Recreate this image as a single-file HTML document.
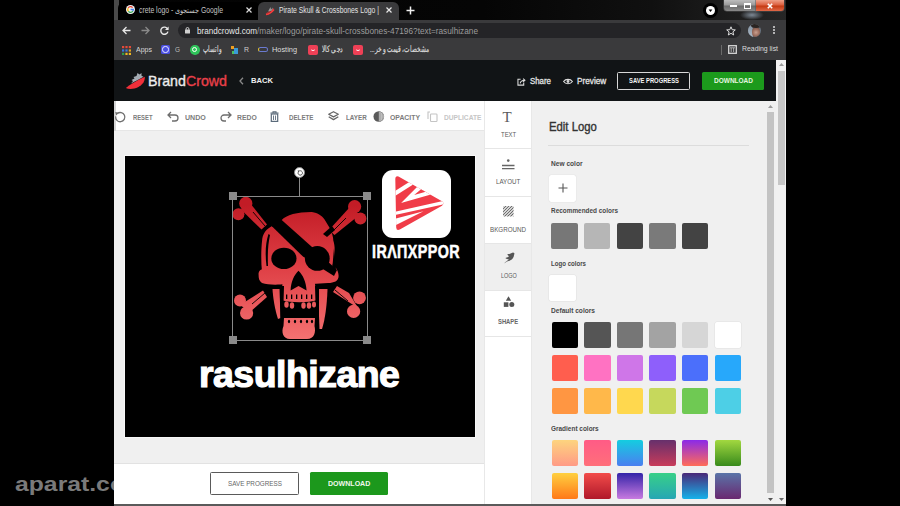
<!DOCTYPE html>
<html><head><meta charset="utf-8">
<style>
*{margin:0;padding:0;box-sizing:border-box}
html,body{width:900px;height:506px;overflow:hidden;background:#000;font-family:"Liberation Sans",sans-serif;position:relative}
.a{position:absolute}
.t{position:absolute;white-space:nowrap;line-height:1}
svg{position:absolute;overflow:visible}
#tabstrip{left:114px;top:0;width:672px;height:20px;background:linear-gradient(90deg,#030303 0%,#050505 55%,#101010 80%,#262626 100%)}
#toolbar{left:114px;top:20px;width:672px;height:40px;background:#3a3a3c}
#omni{left:178px;top:23px;width:563px;height:15px;border-radius:7.5px;background:#242427}
#hdr{left:114px;top:60px;width:662px;height:41px;background:#111416}
#tools{left:114px;top:101px;width:370px;height:30px;background:#fff;border-bottom:1px solid #e6e6e6}
#work{left:114px;top:131px;width:370px;height:332px;background:#f0f0f0}
#bottom{left:114px;top:463px;width:370px;height:41px;background:#fff;border-top:1px solid #e2e2e2}
#tabs{left:484px;top:101px;width:48px;height:403px;background:#fff;border-left:1px solid #e8e8e8;border-right:1px solid #e8e8e8}
#panel{left:532px;top:101px;width:244px;height:403px;background:#f0f0f0}
#oscroll{left:776px;top:60px;width:10px;height:444px;background:#f1f1f1}
#taskbar{left:114px;top:504px;width:672px;height:2px;background:#5a5a5a}
.tl{font-size:7px;font-weight:bold;color:#7c7c7c}
.sw{position:absolute;width:26.6px;height:26.8px;border-radius:2px}
.pt{font-size:7.5px;font-weight:bold;color:#484848}
.tabl{position:absolute;font-size:6.5px;color:#5a5a5a;line-height:1;white-space:nowrap}
.div{position:absolute;left:485px;width:46px;height:1px;background:#e6e6e6}
</style></head><body>
<!-- ===== CHROME TAB STRIP ===== -->
<div class="a" id="tabstrip"></div>
<div class="a" style="left:114px;top:0;width:5px;height:20px;background:#4a4a4a"></div>
<div class="a" style="left:118px;top:1.5px;width:142px;height:18.5px;background:#000;border-radius:6px 6px 0 0"></div>
<div class="a" style="left:258px;top:2px;width:141px;height:19px;background:#3a3a3c;border-radius:6px 6px 0 0"></div>
<!-- favicon G -->
<svg style="left:125.5px;top:5px" width="9" height="9" viewBox="0 0 9 9"><circle cx="4.5" cy="4.5" r="4.5" fill="#f2f2f2"></circle>
<path d="M6.6 2.6 A2.8 2.8 0 0 0 2.2 3.0" stroke="#ea4335" stroke-width="1.3" fill="none"></path>
<path d="M2.2 3.0 A2.8 2.8 0 0 0 2.4 6.3" stroke="#fbbc05" stroke-width="1.3" fill="none"></path>
<path d="M2.4 6.3 A2.8 2.8 0 0 0 6.9 6.0" stroke="#34a853" stroke-width="1.3" fill="none"></path>
<path d="M6.9 6.0 A2.8 2.8 0 0 0 7.3 4.5 H4.6" stroke="#4285f4" stroke-width="1.3" fill="none"></path>
</svg>
<div class="t" style="left: 139px; top: 6px; font-size: 8.3px; color: rgb(196, 196, 196); transform: scaleX(0.8245); transform-origin: 0px 50%;">crete logo - جستجوی Google</div>
<svg style="left:246px;top:7px" width="6" height="6" viewBox="0 0 6 6"><path d="M0.5 0.5 L5.5 5.5 M5.5 0.5 L0.5 5.5" stroke="#ddd" stroke-width="1.2"></path></svg>
<svg style="left:265px;top:6px" width="10" height="9" viewBox="0 0 10 9"><path d="M0.5 8 C3 7 7 5 9.5 2 L7.5 3 C5 5 2 6.5 0.5 8 Z" fill="#e02e2e"></path><path d="M3 5.5 L5.5 1 L6 3.5 L8 1.5 L7 4.5 Z" fill="#9a9a9a"></path><path d="M1 8.5 C4 8 7 6 9 3.5" stroke="#ff3a3a" stroke-width="1.5" fill="none"></path></svg>
<div class="t" style="left: 279px; top: 5.8px; font-size: 8.3px; color: rgb(228, 228, 228); transform: scaleX(0.8223); transform-origin: 0px 50%;">Pirate Skull &amp; Crossbones Logo |</div>
<svg style="left:386px;top:7px" width="6" height="6" viewBox="0 0 6 6"><path d="M0.5 0.5 L5.5 5.5 M5.5 0.5 L0.5 5.5" stroke="#e8e8e8" stroke-width="1.2"></path></svg>
<svg style="left:406px;top:6px" width="9" height="9" viewBox="0 0 9 9"><path d="M4.5 0.5 V8.5 M0.5 4.5 H8.5" stroke="#f0f0f0" stroke-width="1.5"></path></svg>
<!-- caption buttons -->
<div class="a" style="left:703px;top:2.5px;width:15px;height:15px;border-radius:50%;background:#000"></div>
<div class="a" style="left:706px;top:5.5px;width:9px;height:9px;border-radius:50%;background:#fff"></div>
<svg style="left:706px;top:5.5px" width="9" height="9" viewBox="0 0 9 9"><path d="M2.6 3.6 L6.4 3.6 L4.5 6 Z" fill="#000"></path></svg>
<div class="a" style="left:724px;top:0;width:32px;height:11px;border-radius:0 0 0 3px;background:linear-gradient(#bdbdbd,#9a9a9a 45%,#6a6a6a 55%,#8a8a8a);box-shadow:0 0 0 0.5px #555"></div>
<div class="a" style="left:730px;top:5px;width:7px;height:2px;background:#fff"></div>
<div class="a" style="left:744px;top:2.5px;width:7px;height:6px;border:1.4px solid #fff;border-top-width:2px"></div>
<div class="a" style="left:756px;top:0;width:28px;height:11px;border-radius:0 0 3px 0;background:linear-gradient(#eea088,#dc6040 45%,#c43a12 55%,#e06848);box-shadow:0 0 0 0.5px #555"></div>
<svg style="left:767px;top:2.5px" width="6" height="6" viewBox="0 0 6 6"><path d="M0.8 0.8 L5.2 5.2 M5.2 0.8 L0.8 5.2" stroke="#fff" stroke-width="1.6"></path></svg>
<div class="a" style="left:740px;top:10px;width:24px;height:10px;background:radial-gradient(ellipse at center,#7d8894 0%,rgba(50,50,50,0) 70%)"></div>
<!-- ===== TOOLBAR ===== -->
<div class="a" id="toolbar"></div>
<svg style="left:122px;top:25.5px" width="9" height="9" viewBox="0 0 9 9"><path d="M8.5 4.5 H1 M4.5 1 L1 4.5 L4.5 8" stroke="#e8e8e8" stroke-width="1.3" fill="none"></path></svg>
<svg style="left:141px;top:25.5px" width="9" height="9" viewBox="0 0 9 9"><path d="M0.5 4.5 H8 M4.5 1 L8 4.5 L4.5 8" stroke="#8a8a8a" stroke-width="1.3" fill="none"></path></svg>
<svg style="left:159.5px;top:25.5px" width="9" height="9" viewBox="0 0 9 9"><path d="M7.6 3 A3.6 3.6 0 1 0 7.9 5.6" stroke="#e8e8e8" stroke-width="1.4" fill="none"></path><path d="M8.6 0.4 V4 H5 Z" fill="#e8e8e8"></path></svg>
<div class="a" id="omni"></div>
<svg style="left:185px;top:27px" width="5" height="6.5" viewBox="0 0 5 6.5"><rect x="0" y="2.5" width="5" height="4" rx="0.5" fill="#cfcfcf"></rect><path d="M1.1 2.8 V1.9 A1.4 1.4 0 0 1 3.9 1.9 V2.8" stroke="#cfcfcf" stroke-width="1" fill="none"></path></svg>
<div class="t" style="left:197px;top:26.5px;font-size:8.6px;color:#e8e8e8"><span style="display: inline-block; transform: scaleX(0.9444); transform-origin: 0px 50%;">brandcrowd.com</span></div>
<div class="t" style="left: 257px; top: 26.5px; font-size: 8.6px; color: rgb(156, 156, 156); transform: scaleX(0.9608); transform-origin: 0px 50%;">/maker/logo/pirate-skull-crossbones-47196?text=rasulhizane</div>
<svg style="left:726px;top:25.5px" width="10" height="10" viewBox="0 0 10 10"><path d="M5 0.8 L6.2 3.7 L9.3 3.9 L6.9 5.9 L7.7 9 L5 7.3 L2.3 9 L3.1 5.9 L0.7 3.9 L3.8 3.7 Z" stroke="#ddd" stroke-width="1" fill="none" stroke-linejoin="round"></path></svg>
<div class="a" style="left:748px;top:24px;width:13px;height:13px;border-radius:50%;overflow:hidden;background:#6a7480">
<div class="a" style="left:0;top:0;width:5px;height:13px;background:linear-gradient(#8090a0,#b0bcc8)"></div>
<div class="a" style="left:4px;top:3px;width:8px;height:10px;border-radius:45%;background:radial-gradient(circle at 50% 55%,#c8a090 0%,#a07060 45%,#5a4038 100%)"></div>
<div class="a" style="left:3px;top:-1px;width:10px;height:5px;border-radius:50%;background:#2a2422"></div>
</div>
<div class="a" style="left:772.5px;top:26px;width:2px;height:2px;border-radius:1px;background:#ddd;box-shadow:0 3px 0 #ddd,0 6px 0 #ddd"></div>
<!-- bookmarks -->
<svg style="left:122px;top:45.6px" width="9" height="9" viewBox="0 0 9 9">
<rect x="0" y="0" width="2.2" height="2.2" fill="#e64a3a"></rect><rect x="3.4" y="0" width="2.2" height="2.2" fill="#e64a3a"></rect><rect x="6.8" y="0" width="2.2" height="2.2" fill="#e64a3a"></rect>
<rect x="0" y="3.4" width="2.2" height="2.2" fill="#3a78e0"></rect><rect x="3.4" y="3.4" width="2.2" height="2.2" fill="#3a78e0"></rect><rect x="6.8" y="3.4" width="2.2" height="2.2" fill="#e0a020"></rect>
<rect x="0" y="6.8" width="2.2" height="2.2" fill="#2fa04a"></rect><rect x="3.4" y="6.8" width="2.2" height="2.2" fill="#f0b820"></rect><rect x="6.8" y="6.8" width="2.2" height="2.2" fill="#f0b820"></rect></svg>
<div class="t" style="left: 135.8px; top: 45.5px; font-size: 8px; color: rgb(216, 216, 216); transform: scaleX(0.8775); transform-origin: 0px 50%;">Apps</div>
<div class="a" style="left:161px;top:45.1px;width:9px;height:9px;border-radius:1.5px;background:#4a4ee0"></div>
<div class="a" style="left:162.3px;top:46.4px;width:6.4px;height:6.4px;border-radius:50%;border:1px solid #e6e8ff"></div>
<div class="t" style="left: 175px; top: 45.5px; font-size: 8px; color: rgb(188, 188, 188); transform: scaleX(0.802); transform-origin: 0px 50%;">G</div>
<div class="a" style="left:190px;top:45.1px;width:9.5px;height:9.5px;border-radius:50%;background:#2fc45a"></div>
<div class="a" style="left:192.2px;top:47.3px;width:5px;height:5px;border-radius:50%;border:1px solid #fff"></div>
<div class="t" style="left: 203px; top: 44.6px; font-size: 8.5px; color: rgb(221, 221, 221); -webkit-text-stroke: 0.2px rgb(221, 221, 221); transform: scaleX(0.6207); transform-origin: 0px 50%;">واتساپ</div>
<div class="a" style="left:231px;top:46.1px;width:3px;height:3px;background:#f0a020"></div>
<div class="a" style="left:234px;top:47.6px;width:4px;height:6px;background:#3a9ad8"></div>
<div class="a" style="left:232px;top:50.6px;width:2px;height:3px;background:#4cc060"></div>
<div class="t" style="left: 244px; top: 45.5px; font-size: 8px; color: rgb(204, 204, 204); transform: scaleX(0.8649); transform-origin: 0px 50%;">R</div>
<div class="a" style="left:258px;top:47.1px;width:10px;height:5px;border-radius:3px;border:1.5px solid #6a7ad0;border-left-color:#e0c030"></div>
<div class="t" style="left: 272px; top: 45.5px; font-size: 8px; color: rgb(221, 221, 221); transform: scaleX(0.9217); transform-origin: 0px 50%;">Hosting</div>
<div class="a" style="left:308px;top:45.1px;width:10px;height:9.5px;border-radius:2px;background:#ef4056"></div>
<div class="a" style="left:311px;top:48.6px;width:4px;height:2px;border-bottom:1px solid #fff;border-radius:0 0 3px 3px"></div>
<div class="t" style="left: 322px; top: 44.6px; font-size: 8.5px; color: rgb(221, 221, 221); -webkit-text-stroke: 0.2px rgb(221, 221, 221); transform: scaleX(0.6486); transform-origin: 0px 50%;">دجی کالا</div>
<div class="a" style="left:353px;top:45.1px;width:10px;height:9.5px;border-radius:2px;background:#ef4056"></div>
<div class="a" style="left:356px;top:48.6px;width:4px;height:2px;border-bottom:1px solid #fff;border-radius:0 0 3px 3px"></div>
<div class="t" style="left: 370px; top: 44.6px; font-size: 8.5px; color: rgb(221, 221, 221); direction: rtl; unicode-bidi: isolate; -webkit-text-stroke: 0.2px rgb(221, 221, 221); transform: scaleX(0.6471); transform-origin: 0px 50%;">مشخصات، قیمت و خر...</div>
<div class="a" style="left:721px;top:45px;width:1px;height:10px;background:#6a6a6a"></div>
<svg style="left:727.8px;top:44.8px" width="9" height="9" viewBox="0 0 9 9"><rect x="0.7" y="0.7" width="7.6" height="7.6" stroke="#d8d8d8" stroke-width="1.3" fill="none"></rect><path d="M2 2.8 H7 M3.2 3 V7 M5.6 3 V7" stroke="#c8c8c8" stroke-width="0.8"></path></svg>
<div class="t" style="left: 741.5px; top: 44.9px; font-size: 8px; color: rgb(221, 221, 221); transform: scaleX(0.861); transform-origin: 0px 50%;">Reading list</div>
<!-- ===== BRANDCROWD HEADER ===== -->
<div class="a" id="hdr"></div>
<svg style="left:125px;top:72px" width="21" height="18" viewBox="0 0 21 18">
<path d="M6 11.5 L8 9 L6.5 8 L9.5 6.5 L8.5 5 L11.5 4 L12.5 1 L14.5 2.5 L16.5 1 L16.5 3.8 L18.5 4.8 C14.5 7 10 9.5 6 11.5 Z" fill="#a4acb4"></path>
<path d="M0.8 16 C5 12.5 12 8.5 19.8 4.8 C20.2 10 16.5 14.5 9.5 16.6 C6 17.4 3 17.2 0.8 16 Z" fill="#f0303a"></path>
</svg>
<div class="t" style="left: 147.6px; top: 73.6px; font-size: 14.5px; color: rgb(236, 236, 236); -webkit-text-stroke: 0.35px; transform: scaleX(0.98); transform-origin: 0px 50%;">Brand<span style="color:#e9404a">Crowd</span></div>
<svg style="left:238.5px;top:77px" width="5" height="8" viewBox="0 0 5 8"><path d="M4 0.8 L1 4 L4 7.2" stroke="#8a8a8a" stroke-width="1.3" fill="none"></path></svg>
<div class="t" style="left: 251px; top: 77px; font-size: 8px; font-weight: bold; color: rgb(240, 240, 240); transform: scaleX(0.952); transform-origin: 0px 50%;">BACK</div>
<svg style="left:516.8px;top:77.5px" width="9" height="8" viewBox="0 0 10 9"><path d="M4 1.5 H1 V8 H7.5 V5" stroke="#dcdcdc" stroke-width="1.2" fill="none"></path><path d="M3.5 6 C4 3.5 6 2.5 8.5 2.5 M6.8 0.8 L8.8 2.5 L6.8 4.2" stroke="#dcdcdc" stroke-width="1.2" fill="none"></path></svg>
<div class="t" style="left: 530.3px; top: 76.7px; font-size: 9px; color: rgb(228, 228, 228); -webkit-text-stroke: 0.3px; transform: scaleX(0.8739); transform-origin: 0px 50%;">Share</div>
<svg style="left:563px;top:78px" width="10" height="7" viewBox="0 0 10 7"><path d="M0.6 3.5 C2.5 0.6 7.5 0.6 9.4 3.5 C7.5 6.4 2.5 6.4 0.6 3.5 Z" stroke="#dcdcdc" stroke-width="1.1" fill="none"></path><circle cx="5" cy="3.5" r="1.4" fill="#dcdcdc"></circle></svg>
<div class="t" style="left: 577px; top: 76.7px; font-size: 9px; color: rgb(228, 228, 228); -webkit-text-stroke: 0.3px; transform: scaleX(0.9121); transform-origin: 0px 50%;">Preview</div>
<div class="a" style="left:617px;top:72px;width:73px;height:17.5px;border:1.6px solid #d8d8d8;border-radius:1.5px"></div>
<div class="t" style="left: 629px; top: 76.8px; font-size: 7px; font-weight: bold; color: rgb(244, 244, 244); transform: scaleX(0.831); transform-origin: 0px 50%;">SAVE PROGRESS</div>
<div class="a" style="left:702px;top:72px;width:62px;height:17.5px;background:#1c9a1c;border-radius:1.5px"></div>
<div class="t" style="left: 714px; top: 76.8px; font-size: 7px; font-weight: bold; color: rgb(230, 246, 224); transform: scaleX(0.9286); transform-origin: 0px 50%;">DOWNLOAD</div>
<!-- outer scrollbar -->
<div class="a" id="oscroll"></div>
<svg style="left:778.5px;top:63px" width="5" height="3" viewBox="0 0 5 3"><path d="M0 3 L2.5 0 L5 3 Z" fill="#9a9a9a"></path></svg>
<div class="a" style="left:777.5px;top:70.5px;width:7.5px;height:114.7px;background:#c6c6c6"></div>
<svg style="left:778.5px;top:498px" width="5" height="3" viewBox="0 0 5 3"><path d="M0 0 L2.5 3 L5 0 Z" fill="#6a6a6a"></path></svg>
<!-- ===== TOOLS ROW ===== -->
<div class="a" id="tools"></div>
<div class="a" style="left:114px;top:101px;width:1.5px;height:403px;background:#d4d4d4"></div>
<svg style="left:114px;top:110.5px" width="12" height="12" viewBox="0 0 12 12"><path d="M3.3 2.6 A4.6 4.6 0 1 1 1.7 5.4" stroke="#707070" stroke-width="1.3" fill="none"></path><path d="M1.2 1.0 L4.8 1.8 L2.2 4.6 Z" fill="#707070"></path></svg>
<div class="t tl" style="left: 132.5px; top: 113.8px; transform: scaleX(0.8353); transform-origin: 0px 50%;">RESET</div>
<svg style="left:167px;top:111px" width="12" height="11" viewBox="0 0 12 11"><path d="M4 1 L1 4 L4 7 M1 4 H8 A3 3 0 0 1 8 10 H5" stroke="#6e6e6e" stroke-width="1.3" fill="none"></path></svg>
<div class="t tl" style="left: 184.6px; top: 113.8px; transform: scaleX(1.0085); transform-origin: 0px 50%;">UNDO</div>
<svg style="left:219.5px;top:111px" width="12" height="11" viewBox="0 0 12 11"><path d="M8 1 L11 4 L8 7 M11 4 H4 A3 3 0 0 0 4 10 H6" stroke="#6e6e6e" stroke-width="1.3" fill="none"></path></svg>
<div class="t tl" style="left: 237px; top: 113.8px; transform: scaleX(0.9736); transform-origin: 0px 50%;">REDO</div>
<svg style="left:270px;top:110.5px" width="9" height="11" viewBox="0 0 9 11"><path d="M0.5 2 H8.5 M3 2 V0.8 H6 V2" stroke="#5a6a7a" stroke-width="1.1" fill="none"></path><rect x="1.3" y="3" width="6.4" height="7.4" stroke="#5a6a7a" stroke-width="1.2" fill="none"></rect><path d="M3.5 4.5 V9 M5.5 4.5 V9" stroke="#5a6a7a" stroke-width="0.9"></path></svg>
<div class="t tl" style="left: 288.5px; top: 113.8px; transform: scaleX(0.8869); transform-origin: 0px 50%;">DELETE</div>
<svg style="left:327.5px;top:110.5px" width="11" height="10.5" viewBox="0 0 11 10.5"><path d="M5.5 0.7 L10.3 3.3 L5.5 5.9 L0.7 3.3 Z" stroke="#666" stroke-width="1.2" fill="none" stroke-linejoin="round"></path><path d="M0.7 5.8 L5.5 8.6 L10.3 5.8" stroke="#666" stroke-width="1.3" fill="none" stroke-linejoin="round"></path></svg>
<div class="t tl" style="left: 345.6px; top: 113.8px; transform: scaleX(0.9007); transform-origin: 0px 50%;">LAYER</div>
<svg style="left:372.5px;top:110.5px" width="11.5" height="11" viewBox="0 0 11.5 11"><circle cx="5.75" cy="5.5" r="5.3" fill="#5a5a5a"></circle><path d="M5.75 0.2 A5.3 5.3 0 0 1 5.75 10.8 Z" fill="#9a9a9a"></path><path d="M7 1 V10 M8.6 2 V9 M10 3.5 V7.5" stroke="#ddd" stroke-width="0.6"></path></svg>
<div class="t tl" style="left: 390px; top: 113.8px; transform: scaleX(0.9801); transform-origin: 0px 50%;">OPACITY</div>
<svg style="left:426.5px;top:110.5px" width="11" height="11" viewBox="0 0 11 11"><path d="M3 1 H1 V8" stroke="#c4c4c4" stroke-width="1.1" fill="none"></path><rect x="3.5" y="3" width="6.5" height="7.5" rx="0.8" stroke="#c4c4c4" stroke-width="1.1" fill="none"></rect></svg>
<div class="t tl" style="left: 443.6px; top: 113.8px; color: rgb(198, 198, 198); transform: scaleX(0.9457); transform-origin: 0px 50%;">DUPLICATE</div>
<!-- ===== WORK AREA ===== -->
<div class="a" id="work"></div>
<div class="a" style="left:124.6px;top:155.5px;width:350.4px;height:281.5px;background:#000;box-shadow:0 0 0 1px #f8f8f8"></div>
<!-- skull -->
<svg style="left:228px;top:190px" width="144" height="155" viewBox="0 0 144 155">
<defs><linearGradient id="rg" gradientUnits="userSpaceOnUse" x1="0" y1="15" x2="0" y2="150"><stop offset="0" stop-color="#c21c26"></stop><stop offset="0.45" stop-color="#de3e44"></stop><stop offset="1" stop-color="#f47272"></stop></linearGradient></defs>
<g fill="url(#rg)">
<!-- bones TL -->
<circle cx="17.8" cy="13.4" r="6.6"></circle><circle cx="10.4" cy="24.3" r="6"></circle>
<path d="M12.5 19 L22 13 L39 34.5 L33.5 39.5 Z"></path>
<!-- TR -->
<circle cx="126.6" cy="16.6" r="6.6"></circle><circle cx="132.4" cy="28.6" r="6"></circle>
<path d="M121.5 17.5 L132 24.5 L106.5 45 L101 40 Z"></path>
<!-- BL -->
<circle cx="12" cy="110.5" r="6"></circle><circle cx="18.6" cy="123" r="6.6"></circle>
<path d="M12 115 L22 122 L39 107 L35 100.5 Z"></path>
<!-- BR -->
<circle cx="131.5" cy="107.8" r="6.4"></circle><circle cx="125.6" cy="121.4" r="6.6"></circle>
<path d="M121 103 L130 118 L105 102 L109 96 Z"></path>
<!-- cranium -->
<path d="M53.7 30.1 C58 25 70 22 83.9 22.1 C90 23 94 26 96.4 29.2 L101.7 38.1 C104 43 105.3 47 105.3 50.6 C107 56 107 61 106 68 L104 78 L86 90 L56 90 L34 82 C33 72 33 60 34.1 50.6 C34.5 45 37 40 42.1 37.2 Z"></path>
<!-- cheeks -->
<path d="M30.6 85 C30 80 34 78 40 78.5 L58 80 L57 94 C50 95 40 95 34 93 C31 91 30.6 88 30.6 85 Z"></path>
<path d="M84 80 L101 75.5 C107 75 110.6 80 110.6 86 C110.6 91 106 93 100 93 L84 94 Z"></path>
<!-- maxilla -->
<path d="M55 88 L86 88 L89.5 110 C80 113 63 113 53 110 Z"></path>
<!-- side jaws -->
<path d="M44.5 99 L51.5 99 L52.5 128 L50 129 C47 120 45 108 44.5 99 Z"></path>
<path d="M90 99 L99.5 99 C99 115 97 130 94 139 L91.5 139 Z"></path>
<!-- lower teeth + chin -->
<path d="M56 128 L87 128 L86.5 136 C88 142 86.5 149 79 149 L62 149 C55 149 53 142 55.5 136 Z"></path>
</g>
<g fill="#000">
<!-- band -->
<path d="M53.7 30.1 L85.7 58.6 L109 80 L106 86 L75 66.6 L43.9 36.3 L42 33 L48 27 Z"></path>
<!-- notch for TR bone -->
<path d="M95 44 L104 36 L107 40 L99 47 Z"></path>
<!-- eyes -->
<ellipse cx="55.9" cy="68.4" rx="12.6" ry="10.7"></ellipse>
<ellipse cx="89.3" cy="68.4" rx="12.4" ry="12.4"></ellipse>
<!-- bone splits -->
<path d="M25 22 L37 36" stroke="#000" stroke-width="0.9"></path>
<path d="M118 28 L104 42" stroke="#000" stroke-width="0.9"></path>
<path d="M24 114 L37 103" stroke="#000" stroke-width="0.9"></path>
<path d="M120 111 L107 100" stroke="#000" stroke-width="0.9"></path>
<!-- creases -->
<path d="M40.5 44 C37.5 53 37 64 38.5 76 L40 76 C39.5 64 40 54 42 45 Z"></path>
<path d="M106 58 L108 80 L104 82 Z"></path>
<!-- nose -->
<path d="M70.5 80.8 C66 85 63 92 62.6 100.4 L70.5 96 L78.6 100.4 C78 92 75 85 70.5 80.8 Z"></path>
<!-- mouth gap -->
<path d="M52.5 113 C63 116 80 116 90 113 L89 128 L54 128 Z"></path>
<!-- cheek / jaw gaps -->
<path d="M52 96 L56 96 L55 128 L52.5 128 Z"></path>
<path d="M87 96 L91 96 L91 139 L88 130 Z"></path>
</g>
<g fill="#000">
<rect x="58" y="104.5" width="1.3" height="4.5"></rect><rect x="63" y="104.5" width="1.3" height="4.5"></rect><rect x="68" y="104.5" width="1.3" height="4.5"></rect><rect x="73" y="104.5" width="1.3" height="4.5"></rect><rect x="78" y="104.5" width="1.3" height="4.5"></rect><rect x="83" y="104.5" width="1.3" height="4.5"></rect>
</g>
<g fill="url(#rg)">
<ellipse cx="58.5" cy="114.5" rx="2.2" ry="3.2"></ellipse><ellipse cx="64" cy="115.5" rx="2.2" ry="3.2"></ellipse><ellipse cx="75.5" cy="115.5" rx="2.2" ry="3.2"></ellipse><ellipse cx="81" cy="115.5" rx="2.2" ry="3.2"></ellipse><ellipse cx="86" cy="114.5" rx="2" ry="3"></ellipse>
</g>
<g fill="#000">
<ellipse cx="61" cy="131.5" rx="1.1" ry="1.8"></ellipse><ellipse cx="67" cy="131.5" rx="1.1" ry="1.8"></ellipse><ellipse cx="73" cy="131.5" rx="1.1" ry="1.8"></ellipse><ellipse cx="79" cy="131.5" rx="1.1" ry="1.8"></ellipse><ellipse cx="84" cy="131.5" rx="1.1" ry="1.8"></ellipse>
</g>
</svg>
<!-- selection box -->
<div class="a" style="left:232px;top:195.5px;width:135.5px;height:145px;border:1.2px solid #8a8a8a"></div>
<div class="a" style="left:299px;top:177px;width:1.2px;height:19px;background:#8a8a8a"></div>
<div class="a" style="left:294px;top:167px;width:11px;height:11px;border-radius:50%;background:#fff;border:1px solid #888"></div>
<svg style="left:296.5px;top:169.5px" width="6" height="6" viewBox="0 0 6 6"><path d="M1.2 2.2 A2.2 2.2 0 1 0 2.5 0.9" stroke="#444" stroke-width="0.9" fill="none"></path><path d="M0.6 0.4 L2.8 0.6 L1.4 2.4 Z" fill="#444"></path></svg>
<div class="a" style="left:228.5px;top:192px;width:8px;height:8px;background:#8a8a8a"></div>
<div class="a" style="left:363px;top:192px;width:8px;height:8px;background:#8a8a8a"></div>
<div class="a" style="left:228.5px;top:336px;width:8px;height:8px;background:#8a8a8a"></div>
<div class="a" style="left:363px;top:336px;width:8px;height:8px;background:#8a8a8a"></div>
<!-- iranxppor logo -->
<div class="a" style="left:382px;top:169.8px;width:69px;height:68.5px;border-radius:11px;background:#fff"></div>
<svg style="left:382px;top:169.8px" width="69" height="68.5" viewBox="0 0 69 68.5">
<defs><clipPath id="tri"><path d="M16.5 6.6 Q13.2 5.3 13.3 9 L14.2 57.5 Q14.5 61.2 17.8 59.6 L60 35.8 Q62.8 33.2 60 31.2 Z"></path></clipPath></defs>
<g clip-path="url(#tri)">
<rect x="0" y="0" width="69" height="69" fill="#f03c48"></rect>
<path d="M10 25.5 L32 11.5" stroke="#fff" stroke-width="4.2"></path>
<path d="M19.1 33 L37.5 14.5 L66 14 L66 24.2 L48 24.7 Z" fill="#fff"></path>
<path d="M32.2 24.9 L39.9 18.4 L45.5 21.3 Z" fill="#f03c48"></path>
<path d="M8 44.5 L66 31.5" stroke="#fff" stroke-width="3.4"></path>
<path d="M41.5 41.2 L8 50 L8 58 Z" fill="#fff"></path>
</g>
</svg>
<div class="t" style="left: 372.4px; top: 243.4px; font-size: 18px; font-weight: bold; color: rgb(255, 255, 255); letter-spacing: 0.5px; -webkit-text-stroke: 0.5px rgb(255, 255, 255); transform: scaleX(0.7962); transform-origin: 0px 50%;">IRΛΠXPPOR</div>
<!-- rasulhizane -->
<div class="t" style="left: 198.6px; top: 356px; font-size: 37px; font-weight: bold; color: rgb(255, 255, 255); -webkit-text-stroke: 1.2px rgb(255, 255, 255); letter-spacing: -0.5px; transform: scaleX(1.0117); transform-origin: 0px 50%;">rasulhizane</div>

<div class="a" id="bottom"></div>
<div class="a" style="left:210px;top:472px;width:89px;height:23.3px;border:1.5px solid #5a5a5a;border-radius:1.5px;background:#fff"></div>
<div class="t" style="left: 227.8px; top: 480.2px; font-size: 7px; color: rgb(102, 102, 102); transform: scaleX(0.9033); transform-origin: 0px 50%;">SAVE PROGRESS</div>
<div class="a" style="left:310.4px;top:472px;width:77.8px;height:23.3px;background:#1c981c;border-radius:1.5px"></div>
<div class="t" style="left: 328.4px; top: 480.2px; font-size: 7px; font-weight: bold; color: rgb(242, 248, 238); transform: scaleX(1.0071); transform-origin: 0px 50%;">DOWNLOAD</div>
<!-- ===== SIDEBAR TABS ===== -->
<div class="a" id="tabs"></div>
<div class="a" style="left:485px;top:243px;width:46px;height:47px;background:#efefef"></div>
<div class="div" style="top:148px"></div>
<div class="div" style="top:196px"></div>
<div class="div" style="top:242.5px"></div>
<div class="div" style="top:290px"></div>
<div class="div" style="top:335.5px"></div>
<div class="t" style="left:502.5px;top:109.5px;font-family:'Liberation Serif',serif;font-size:15px;color:#5a5a5a">T</div>
<div class="tabl" style="left: 500.8px; top: 132px; transform: scaleX(0.9143); transform-origin: 0px 50%;">TEXT</div>
<svg style="left:502px;top:158.5px" width="12.5" height="11" viewBox="0 0 12.5 11"><circle cx="6.25" cy="1.6" r="1.3" fill="#666"></circle><path d="M0 6.5 H12.5 M0 9.7 H12.5" stroke="#666" stroke-width="1.3"></path></svg>
<div class="tabl" style="left: 496.3px; top: 179px; transform: scaleX(0.9518); transform-origin: 0px 50%;">LAYOUT</div>
<svg style="left:502.6px;top:206px" width="10.6" height="10.6" viewBox="0 0 10.6 10.6"><defs><clipPath id="cp"><rect width="10.6" height="10.6"></rect></clipPath></defs><g clip-path="url(#cp)" stroke="#6a6a6a" stroke-width="1.1"><path d="M-2 2 L2 -2 M-2 5 L5 -2 M-2 8 L8 -2 M-2 11 L11 -2 M1 11 L11 1 M4 11 L11 4 M7 11 L11 7 M10 11 L11 10"></path></g></svg>
<div class="tabl" style="left: 490.3px; top: 226.5px; transform: scaleX(0.9611); transform-origin: 0px 50%;">BKGROUND</div>
<svg style="left:502.5px;top:252px" width="12" height="12" viewBox="0 0 12 12"><path d="M1 11.5 C3 9 5 8.5 6 7 C4.5 7.5 3 7 2.5 6 C4 5.5 5.5 5 6 4 C5 3.8 4.5 3 4.5 2 C6.5 2.5 8 1 10 0.5 C11.5 0.6 11.8 2 11 3 C11 6 8 9 4 9.5 Z" fill="#555"></path></svg>
<div class="tabl" style="left: 501.2px; top: 273.3px; transform: scaleX(0.8406); transform-origin: 0px 50%;">LOGO</div>
<svg style="left:502.5px;top:295.5px" width="12" height="12" viewBox="0 0 12 12"><path d="M5.5 0.3 L8.2 4.8 H2.8 Z" fill="#555"></path><rect x="0.8" y="6.3" width="4.6" height="4.6" fill="#555"></rect><circle cx="8.8" cy="8.6" r="2.5" fill="#555"></circle></svg>
<div class="tabl" style="left: 498.3px; top: 319px; font-weight: bold; color: rgb(102, 102, 102); transform: scaleX(0.8971); transform-origin: 0px 50%;">SHAPE</div>
<!-- ===== PANEL ===== -->
<div class="a" id="panel"></div>
<div class="t" style="left: 549px; top: 119.5px; font-size: 13px; color: rgb(51, 51, 51); -webkit-text-stroke: 0.4px rgb(51, 51, 51); transform: scaleX(0.8701); transform-origin: 0px 50%;">Edit Logo</div>
<div class="a" style="left:548px;top:144.5px;width:200.5px;height:1px;background:#dcdcdc"></div>
<div class="t pt" style="left: 550.8px; top: 159.5px; transform: scaleX(0.8788); transform-origin: 0px 50%;">New color</div>
<div class="a" style="left:549px;top:174.5px;width:27.4px;height:27px;background:#fff;border-radius:2px;box-shadow:0 0 1px rgba(0,0,0,.2)"></div>
<svg style="left:557.5px;top:183px" width="10" height="10" viewBox="0 0 10 10"><path d="M5 0.5 V9.5 M0.5 5 H9.5" stroke="#555" stroke-width="1.1"></path></svg>
<div class="t pt" style="left: 551px; top: 207.2px; transform: scaleX(0.855); transform-origin: 0px 50%;">Recommended colors</div>
<div class="sw" style="left:551.1px;top:222.5px;background:#777"></div>
<div class="sw" style="left:583.9px;top:222.5px;background:#b6b6b6"></div>
<div class="sw" style="left:616.6px;top:222.5px;background:#434343"></div>
<div class="sw" style="left:649.1px;top:222.5px;background:#7a7a7a"></div>
<div class="sw" style="left:681.8px;top:222.5px;background:#434343"></div>
<div class="t pt" style="left: 551px; top: 259.5px; transform: scaleX(0.8154); transform-origin: 0px 50%;">Logo colors</div>
<div class="sw" style="left:549px;top:274.7px;background:#fff;box-shadow:0 0 0 0.5px #e0e0e0"></div>
<div class="t pt" style="left: 551px; top: 307px; transform: scaleX(0.8797); transform-origin: 0px 50%;">Default colors</div>
<div class="sw" style="left:551.5px;top:321.7px;background:#000"></div>
<div class="sw" style="left:584px;top:321.7px;background:#555"></div>
<div class="sw" style="left:616.6px;top:321.7px;background:#767676"></div>
<div class="sw" style="left:649.3px;top:321.7px;background:#a3a3a3"></div>
<div class="sw" style="left:681.9px;top:321.7px;background:#d6d6d6"></div>
<div class="sw" style="left:714.6px;top:321.7px;background:#fff;box-shadow:0 0 0 0.5px #e0e0e0"></div>
<div class="sw" style="left:551.5px;top:354.7px;background:#ff5e4e"></div>
<div class="sw" style="left:584px;top:354.7px;background:#ff72c2"></div>
<div class="sw" style="left:616.6px;top:354.7px;background:#cf76e8"></div>
<div class="sw" style="left:649.3px;top:354.7px;background:#8e5ffb"></div>
<div class="sw" style="left:681.9px;top:354.7px;background:#4b6ffb"></div>
<div class="sw" style="left:714.6px;top:354.7px;background:#27a8fb"></div>
<div class="sw" style="left:551.5px;top:387.7px;background:#ff9642"></div>
<div class="sw" style="left:584px;top:387.7px;background:#ffb84a"></div>
<div class="sw" style="left:616.6px;top:387.7px;background:#ffd84e"></div>
<div class="sw" style="left:649.3px;top:387.7px;background:#c6d85c"></div>
<div class="sw" style="left:681.9px;top:387.7px;background:#6fc953"></div>
<div class="sw" style="left:714.6px;top:387.7px;background:#4dcfe6"></div>
<div class="t pt" style="left: 551px; top: 424.5px; transform: scaleX(0.8604); transform-origin: 0px 50%;">Gradient colors</div>
<div class="sw" style="left:551.5px;top:439.6px;background:linear-gradient(#fdd47e,#ff9a86)"></div>
<div class="sw" style="left:584px;top:439.6px;background:linear-gradient(#ff5b86,#ff6f7a)"></div>
<div class="sw" style="left:616.6px;top:439.6px;background:linear-gradient(#14cde0,#4b7ff0)"></div>
<div class="sw" style="left:649.3px;top:439.6px;background:linear-gradient(#66306c,#c83c5a)"></div>
<div class="sw" style="left:681.9px;top:439.6px;background:linear-gradient(#8a2ae8,#ff6c58)"></div>
<div class="sw" style="left:714.6px;top:439.6px;background:linear-gradient(#a2d840,#388a1c)"></div>
<div class="sw" style="left:551.5px;top:472.6px;background:linear-gradient(#ffd040,#ff7818)"></div>
<div class="sw" style="left:584px;top:472.6px;background:linear-gradient(#f24c4a,#b0182a)"></div>
<div class="sw" style="left:616.6px;top:472.6px;background:linear-gradient(#3424a8,#c87ae0)"></div>
<div class="sw" style="left:649.3px;top:472.6px;background:linear-gradient(#38d088,#26a6b4)"></div>
<div class="sw" style="left:681.9px;top:472.6px;background:linear-gradient(#4a2878,#16b2ea)"></div>
<div class="sw" style="left:714.6px;top:472.6px;background:linear-gradient(#5a74a8,#6a2870)"></div>
<!-- inner scrollbar -->
<div class="a" style="left:766px;top:101px;width:10px;height:403px;background:#f0f0f0"></div>
<svg style="left:768px;top:105px" width="5" height="3" viewBox="0 0 5 3"><path d="M0 3 L2.5 0 L5 3 Z" fill="#9a9a9a"></path></svg>
<div class="a" style="left:767px;top:111.5px;width:7.2px;height:381.5px;background:#c3c3c3"></div>
<svg style="left:768px;top:497.5px" width="5" height="3" viewBox="0 0 5 3"><path d="M0 0 L2.5 3 L5 0 Z" fill="#555"></path></svg>

<div class="a" id="taskbar"></div>
<div class="a" style="left:0;top:460px;width:114px;height:46px;overflow:hidden"><div class="t" style="left: 15px; top: 13.5px; font-size: 20px; font-weight: bold; color: rgb(122, 122, 122); transform: scaleX(1.2369); transform-origin: 0px 50%;">aparat.com</div></div>


</body></html>
